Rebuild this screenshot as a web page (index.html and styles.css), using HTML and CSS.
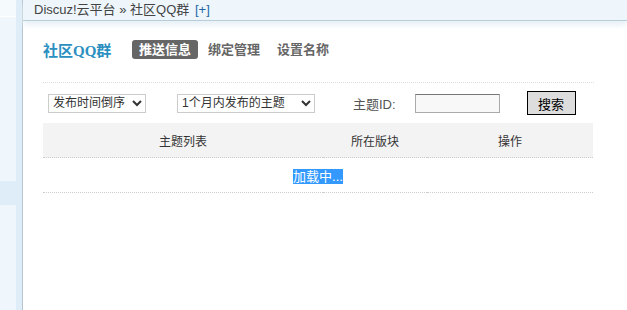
FILE: index.html
```html
<!DOCTYPE html>
<html lang="zh-CN">
<head>
    <meta charset="UTF-8">
    <title>社区QQ群 - Discuz!云平台</title>
    <link rel="stylesheet" href="styles.css">
</head>
<body>
    <div class="side">
        <div class="side-top"></div>
        <div class="side-menu">
            <div class="side-item"></div>
            <div class="side-item on"></div>
        </div>
    </div>
    <div class="main">
        <div class="nav">Discuz!云平台 &raquo; 社区QQ群 <a href="#">[+]</a></div>
        <div class="cont">
            <div class="hd">
                <h3>社区QQ群</h3>
                <ul class="tab">
                    <li class="current"><a href="#">推送信息</a></li>
                    <li><a href="#">绑定管理</a></li>
                    <li><a href="#">设置名称</a></li>
                </ul>
            </div>
            <div class="search">
                <select class="sel1">
                    <option>发布时间倒序</option>
                </select>
                <select class="sel2">
                    <option>1个月内发布的主题</option>
                </select>
                <label>主题ID:</label>
                <input type="text" class="px">
                <button class="btn">搜索</button>
            </div>
            <table class="tb">
                <tr class="header">
                    <th class="c1">主题列表</th>
                    <th class="c2">所在版块</th>
                    <th class="c3">操作</th>
                </tr>
                <tr>
                    <td colspan="3" class="loading"><span>加载中...</span></td>
                </tr>
            </table>
        </div>
    </div>
</body>
</html>
```

FILE: styles.css
```css
body { margin: 0; padding: 0; font: 12px "Liberation Sans", "Noto Sans CJK SC", sans-serif; color: #333; display: flex; height: 310px; overflow: hidden; }
ul, h3 { margin: 0; padding: 0; }
ul { list-style: none; }
a { text-decoration: none; }

/* 左侧菜单 */
.side { width: 16px; background: #f0f7fc; border-right: 6px solid #deedf8; }
.side-top { height: 16px; background: #f5fafd; border-bottom: 1px solid #fff; }
.side-menu { padding-top: 164px; }
.side-item.on { height: 24px; background: #deedf8; }

/* 主体 */
.main { flex: 1; border-left: 1px solid #b6c4cf; }
.nav { height: 20px; line-height: 19px; padding-left: 11px; background: #eef6fb; border-bottom: 1px solid #b9cdd8; box-shadow: 0 4px 6px #e6f0f6; color: #444; font-size: 13px; }
.nav a { color: #2366a8; margin-left: 2px; }
.cont { padding: 17px 33px 0 20px; }

.hd { display: flex; align-items: center; height: 22px; padding-bottom: 22px; border-bottom: 1px dotted #ddd; }
.hd h3 { font: bold 15px "Liberation Serif", "Noto Sans CJK SC", serif; color: #2b8fbf; width: 89px; }
.tab { display: flex; gap: 3px; }
.tab a { display: block; padding: 0 7px; height: 19px; line-height: 19px; font-weight: bold; font-size: 13px; color: #666; border-radius: 3px; }
.tab .current a { background: #666; color: #fff; }

.search { display: flex; align-items: center; height: 40px; padding-left: 5px; }
.search select { height: 19px; font: 12px "Liberation Sans", "Noto Sans CJK SC", sans-serif; color: #333; border: 1px solid #ccc; background: #fff; }
.sel1 { width: 98px; margin-right: 31px; }
.sel2 { width: 138px; margin-right: 38px; }
.search label { color: #555; font-size: 13px; margin-right: 19px; }
.px { width: 81px; height: 15px; border: 1px solid #aaa; border-top-color: #777; background: #f8f8f8; margin-right: 27px; padding: 1px; }
.btn { width: 49px; height: 24px; border: 1px solid #000; background: #ddd; font: 13px "Liberation Sans", "Noto Sans CJK SC", sans-serif; color: #000; padding: 0; }

.tb { width: 550px; border-collapse: collapse; }
.tb th, .tb td { font-weight: normal; font-size: 12px; color: #333; text-align: center; border-bottom: 1px dotted #ccc; padding: 0; }
.tb th { height: 34px; background: #f3f3f3; }
.c1 { width: 280px; }
.c2 { width: 104px; }
.tb td { height: 34px; font-size: 13px; }
.loading span { background: #3399ff; color: #fff; }
```
